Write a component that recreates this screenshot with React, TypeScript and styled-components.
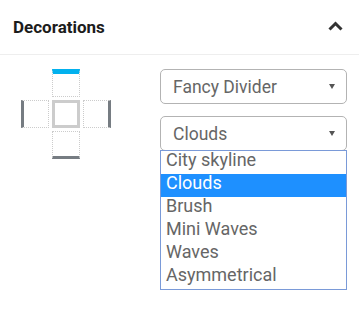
import React from "react";
import styled, {createGlobalStyle} from "styled-components";

const GlobalStyle = createGlobalStyle`
  html, body {
    margin: 0;
    padding: 0;
    background: #fff;
  }
  body {
    font-family: Roboto, "Liberation Sans", Arial, sans-serif;
  }
`

const Panel = styled.div`
  width: 359px;
  min-height: 332px;
  background-color: white;
`

const Header = styled.div`
  display: flex;
  align-items: center;
  justify-content: space-between;
  height: 55px;
  padding: 0 16px 0 13px;
  border-bottom: 1px solid #eeeeee;
  box-sizing: border-box;
`

const Title = styled.div`
  font-weight: 700;
  font-size: 17px;
  color: #1c1c1c;
`

const Chevron = styled.svg`
  display: block;
  margin-bottom: 2px;
`

const Body = styled.div`
  display: flex;
  align-items: flex-start;
  padding: 14px 0 0 21px;
`

const SideGrid = styled.div`
  display: grid;
  grid-template-columns: repeat(3, 28px);
  grid-template-rows: repeat(3, 28px);
  gap: 3px;
`

type Side = "top" | "right" | "bottom" | "left";

const Cell = styled.div<{ $side?: Side, $active?: boolean }>`
  box-sizing: border-box;
  border: 1px dotted #cccccc;
  ${({$side, $active}) => $side && `border-${$side}: ${$active ? "5px solid #02b1ee" : "3px solid #767c82"};`}
`

const Center = styled.div`
  box-sizing: border-box;
  border: 3px solid #cccccc;
`

const Controls = styled.div`
  display: flex;
  flex-direction: column;
  gap: 12px;
  width: 187px;
  margin-left: 49px;
`

const SelectBox = styled.div`
  position: relative;
  display: flex;
  align-items: center;
  justify-content: space-between;
  height: 35px;
  box-sizing: border-box;
  padding: 0 11px 0 12px;
  border: 1px solid #b3b3b3;
  border-radius: 5px;
  font-size: 17.5px;
  color: #666;
`

const Arrow = styled.span`
  width: 0;
  height: 0;
  border-left: 3px solid transparent;
  border-right: 3px solid transparent;
  border-top: 5px solid #555;
`

const Listbox = styled.div`
  position: absolute;
  z-index: 10;
  top: 100%;
  left: -1px;
  right: -1px;
  border: 1px solid #7a9ad8;
  background-color: white;
`

const Option = styled.div<{ $selected?: boolean }>`
  height: 23px;
  box-sizing: border-box;
  padding: 0 6px 5px 5px;
  line-height: 18px;
  font-size: 18px;
  color: ${({$selected}) => $selected ? "#fff" : "#666"};
  background-color: ${({$selected}) => $selected ? "#1e90ff" : "transparent"};
  white-space: nowrap;
`

const options = ["City skyline", "Clouds", "Brush", "Mini Waves", "Waves", "Asymmetrical"];

const App: React.FC = () => {
  const selected = "Clouds";

  return (
    <Panel>
      <GlobalStyle/>
      <Header>
        <Title>Decorations</Title>
        <Chevron width="15" height="10" viewBox="0 0 15 10">
          <polyline points="1.5,8.5 7.5,2.5 13.5,8.5" fill="none" stroke="#333" strokeWidth="3"/>
        </Chevron>
      </Header>
      <Body>
        <SideGrid>
          <div/>
          <Cell $side="top" $active/>
          <div/>
          <Cell $side="left"/>
          <Center/>
          <Cell $side="right"/>
          <div/>
          <Cell $side="bottom"/>
          <div/>
        </SideGrid>
        <Controls>
          <SelectBox>
            <span>Fancy Divider</span>
            <Arrow/>
          </SelectBox>
          <SelectBox>
            <span>{selected}</span>
            <Arrow/>
            <Listbox>
              {options.map(o => (
                <Option key={o} $selected={o === selected}>{o}</Option>
              ))}
            </Listbox>
          </SelectBox>
        </Controls>
      </Body>
    </Panel>
  );
};

export default App;
